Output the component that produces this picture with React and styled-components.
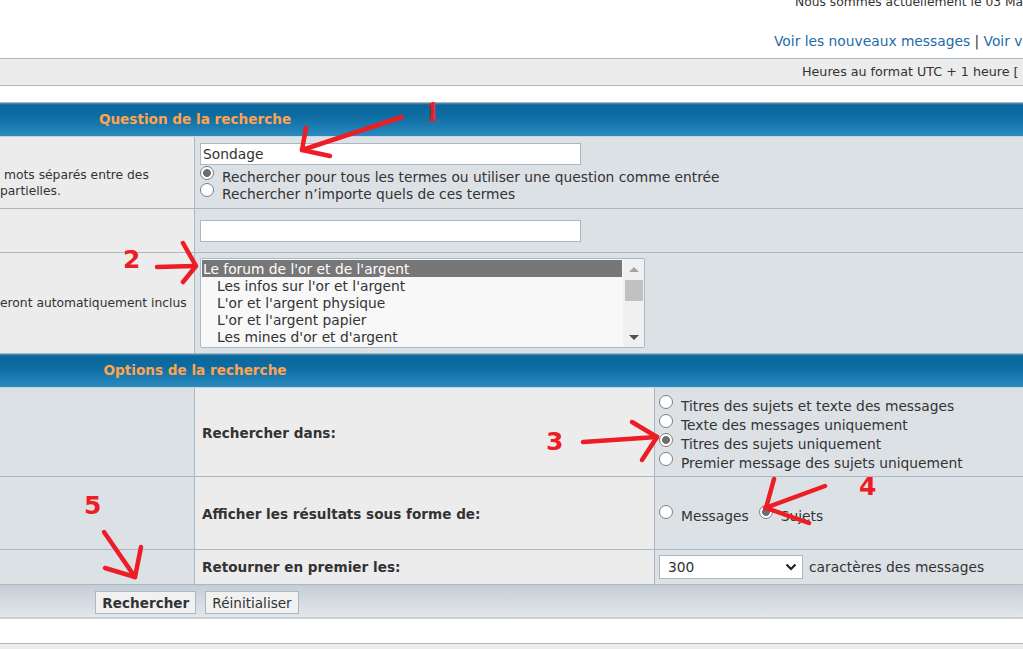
import React from "react";
import styled, { createGlobalStyle } from "styled-components";

// Base
const GlobalStyle = createGlobalStyle`
  *, *::before, *::after { box-sizing: border-box; }
  html, body { margin: 0; padding: 0; background: #fff; }
  body {
    font-family: "DejaVu Sans", Verdana, sans-serif;
    font-size: 13.8px;
    color: #333;
  }
`;

const line = "#a9b8c2";
const tones = { light: "#ececec", blue: "#dce1e5" };

const Page = styled.div`
  position: relative;
  width: 1023px;
  height: 649px;
  overflow: hidden;
  white-space: nowrap;
`;

// Top info
const TopInfo = styled.div`
  height: 58px;
  display: flex;
  flex-direction: column;
`;

const DateLine = styled.div`
  margin: -6px 0 0 795px;
  font-size: 12.3px;
  line-height: 16px;
`;

const NavLinks = styled.div`
  margin: 23px 0 0 774px;
  line-height: 16px;

  a {
    color: #1e6ba8;
    text-decoration: none;
  }
`;

const TimeBar = styled.div`
  height: 28px;
  margin-bottom: 16px;
  padding-left: 802px;
  border-top: 1px solid ${line};
  border-bottom: 1px solid ${line};
  background: ${tones.light};
  font-size: 12.7px;
  line-height: 26px;
`;

// Table
const Header = styled.div`
  height: 35px;
  border-top: 1px solid ${line};
  border-bottom: 1px solid #c9d3da;
  background: linear-gradient(#4f93bb 0, #0a679c 2px, #0d6ca2 40%, #2a8bc1 100%);
`;

const HeaderTitle = styled.div`
  width: 390px;
  text-align: center;
  color: #ffa34f;
  font-size: 13.6px;
  font-weight: bold;
  line-height: 33px;
`;

const Row = styled.div`
  display: grid;
  grid-template-columns: ${(p) => p.$cols};
  height: ${(p) => p.$h}px;

  & + & {
    border-top: 1px solid ${line};
  }
`;

const Cell = styled.div`
  display: flex;
  flex-direction: ${(p) => (p.$col ? "column" : "row")};
  align-items: ${(p) => (p.$col || p.$top ? "flex-start" : "center")};
  padding: ${(p) => p.$pad || "0"};
  background: ${(p) => tones[p.$tone]};
  overflow: hidden;

  &:not(:last-child) {
    border-right: 1px solid ${line};
  }
`;

const Explain = styled.div`
  font-size: 12.3px;
  line-height: 16px;
`;

const ExplainLine = styled.div`
  padding-left: ${(p) => p.$indent || 0}px;
`;

const Label = styled.span`
  font-size: 13.6px;
  font-weight: bold;
`;

const TextInput = styled.input`
  width: 381px;
  height: 22px;
  margin: 0 0 ${(p) => p.$gap || 0}px;
  padding: 0 2px;
  border: 1px solid ${line};
  background: #fff;
  font: inherit;
  color: #333;
  outline: none;
`;

const RadioLine = styled.label`
  display: flex;
  align-items: center;
  height: ${(p) => p.$h || 19}px;
`;

const RadioGroup = styled.div`
  display: flex;
  gap: 10px;
`;

const Radio = styled.span`
  flex: none;
  width: 14px;
  height: 14px;
  margin-right: 8px;
  border-radius: 50%;
  border: 1px solid #7d7d7d;
  background: ${(p) =>
    p.$checked
      ? "radial-gradient(circle, #6e6e6e 0 3.6px, #fff 4.2px)"
      : "#fff"};
  transform: translateY(-4px);
`;

// Listbox
const ListBox = styled.div`
  display: flex;
  width: 445px;
  height: 90px;
  border: 1px solid ${line};
  border-radius: 2px;
  background: #f8f8f8;
`;

const OptionList = styled.div`
  flex: 1;
  padding: 1px;
`;

const Option = styled.div`
  height: 17px;
  line-height: 18px;
  padding-left: ${(p) => (p.$indent ? 15 : 1)}px;
  background: ${(p) => (p.$selected ? "#777" : "transparent")};
  color: ${(p) => (p.$selected ? "#fff" : "#333")};
`;

const ScrollTrack = styled.div`
  display: flex;
  flex-direction: column;
  width: 21px;
  background: #f0f0f0;
`;

const ScrollArrow = styled.div`
  display: flex;
  align-items: center;
  justify-content: center;
  height: 20px;

  &::after {
    content: "";
    border-left: 5px solid transparent;
    border-right: 5px solid transparent;
    ${(p) =>
      p.$down
        ? "border-top: 5px solid #505050;"
        : "border-bottom: 5px solid #a3a3a3;"}
  }
`;

const ScrollThumb = styled.div`
  height: 21px;
  margin: 1px 1px 0 2px;
  background: #c1c1c1;
`;

const ScrollGap = styled.div`
  flex: 1;
`;

// Select
const Select = styled.div`
  display: flex;
  align-items: center;
  justify-content: space-between;
  width: 144px;
  height: 24px;
  padding: 0 5px 0 8px;
  border: 1px solid ${line};
  background: #fff;
`;

const SelectNote = styled.span`
  margin-left: 6px;
`;

// Footer
const Footer = styled.div`
  display: flex;
  height: 35px;
  padding-top: 6px;
  border-top: 1px solid ${line};
  border-bottom: 2px solid #c9d0d7;
  background: linear-gradient(#c5cdd5, #e3e7eb);
`;

const ButtonBar = styled.div`
  display: flex;
  justify-content: center;
  gap: 9px;
  width: 394px;
`;

const Button = styled.button`
  height: 23px;
  padding: 0 6px;
  border: 1px solid ${line};
  background: #f1f1f1;
  font: inherit;
  font-size: 13.6px;
  font-weight: ${(p) => (p.$primary ? "bold" : "normal")};
  color: #333;
`;

const Spacer = styled.div`
  height: 24px;
`;

const BottomBar = styled.div`
  height: 20px;
  border-top: 1px solid ${line};
  background: ${tones.light};
`;

// Annotations
const Marks = styled.svg`
  position: absolute;
  top: 0;
  left: 0;
  pointer-events: none;
`;

const Number = styled.span`
  position: absolute;
  left: ${(p) => p.$x}px;
  top: ${(p) => p.$y}px;
  font-family: ${(p) =>
    p.$serif ? '"Liberation Serif", serif' : '"DejaVu Sans", sans-serif'};
  font-size: ${(p) => (p.$serif ? 29 : 25)}px;
  font-weight: bold;
  line-height: 1;
  color: #ee1c25;
`;

const arrows = [
  { shaft: "402,117 302,150", head: "306,128 302,150 330,156" },
  { shaft: "157,267 195,266", head: "183,243 196,266 183,282" },
  { shaft: "583,442 657,437", head: "632,422 657,437 642,460" },
  { shaft: "825,486 765,508", head: "774,479 766,508 809,523" },
  { shaft: "104,532 135,577", head: "105,568 135,577 141,547" },
];

const Check = () => (
  <svg width="12" height="8" viewBox="0 0 12 8">
    <polyline points="1.5,1.5 6,6 10.5,1.5" fill="none" stroke="#222" strokeWidth="2.2" />
  </svg>
);

const forums = [
  { name: "Le forum de l'or et de l'argent", selected: true },
  { name: "Les infos sur l'or et l'argent", indent: true },
  { name: "L'or et l'argent physique", indent: true },
  { name: "L'or et l'argent papier", indent: true },
  { name: "Les mines d'or et d'argent", indent: true },
];

const whereOptions = [
  "Titres des sujets et texte des messages",
  "Texte des messages uniquement",
  "Titres des sujets uniquement",
  "Premier message des sujets uniquement",
];

const App = () => (
  <Page>
    <GlobalStyle />
    <TopInfo>
      <DateLine>Nous sommes actuellement le 03 Mai 2014, 10:12</DateLine>
      <NavLinks>
        <a href="#">Voir les nouveaux messages</a> | <a href="#">Voir vos messages</a>
      </NavLinks>
    </TopInfo>
    <TimeBar>Heures au format UTC + 1 heure [ Heure d’été ]</TimeBar>

    <Header>
      <HeaderTitle>Question de la recherche</HeaderTitle>
    </Header>
    <Row $cols="195px 1fr" $h={71}>
      <Cell $tone="light" $top $pad="30px 0 0 0">
        <Explain>
          <ExplainLine $indent={4}>mots séparés entre des</ExplainLine>
          <ExplainLine>partielles.</ExplainLine>
        </Explain>
      </Cell>
      <Cell $tone="blue" $col $pad="6px 0 0 5px">
        <TextInput defaultValue="Sondage" $gap={3} />
        <RadioLine $h={17}>
          <Radio $checked />
          Rechercher pour tous les termes ou utiliser une question comme entrée
        </RadioLine>
        <RadioLine $h={17}>
          <Radio />
          Rechercher n’importe quels de ces termes
        </RadioLine>
      </Cell>
    </Row>
    <Row $cols="195px 1fr" $h={44}>
      <Cell $tone="light" />
      <Cell $tone="blue" $pad="0 0 0 5px">
        <TextInput />
      </Cell>
    </Row>
    <Row $cols="195px 1fr" $h={101}>
      <Cell $tone="light">
        <Explain>eront automatiquement inclus</Explain>
      </Cell>
      <Cell $tone="blue" $pad="0 0 0 5px">
        <ListBox>
          <OptionList>
            {forums.map((f) => (
              <Option key={f.name} $selected={f.selected} $indent={f.indent}>
                {f.name}
              </Option>
            ))}
          </OptionList>
          <ScrollTrack>
            <ScrollArrow />
            <ScrollThumb />
            <ScrollGap />
            <ScrollArrow $down />
          </ScrollTrack>
        </ListBox>
      </Cell>
    </Row>

    <Header>
      <HeaderTitle>Options de la recherche</HeaderTitle>
    </Header>
    <Row $cols="195px 460px 1fr" $h={88}>
      <Cell $tone="blue" />
      <Cell $tone="light" $pad="2px 0 0 7px">
        <Label>Rechercher dans:</Label>
      </Cell>
      <Cell $tone="blue" $col $pad="8px 0 0 4px">
        {whereOptions.map((o, i) => (
          <RadioLine key={o}>
            <Radio $checked={i === 2} />
            {o}
          </RadioLine>
        ))}
      </Cell>
    </Row>
    <Row $cols="195px 460px 1fr" $h={73}>
      <Cell $tone="blue" />
      <Cell $tone="light" $pad="1px 0 0 7px">
        <Label>Afficher les résultats sous forme de:</Label>
      </Cell>
      <Cell $tone="blue" $pad="5px 0 0 4px">
        <RadioGroup>
          <RadioLine>
            <Radio />
            Messages
          </RadioLine>
          <RadioLine>
            <Radio $checked />
            Sujets
          </RadioLine>
        </RadioGroup>
      </Cell>
    </Row>
    <Row $cols="195px 460px 1fr" $h={35}>
      <Cell $tone="blue" />
      <Cell $tone="light" $pad="0 0 0 7px">
        <Label>Retourner en premier les:</Label>
      </Cell>
      <Cell $tone="blue" $pad="0 0 0 4px">
        <Select>
          <span>300</span>
          <Check />
        </Select>
        <SelectNote>caractères des messages</SelectNote>
      </Cell>
    </Row>
    <Footer>
      <ButtonBar>
        <Button $primary>Rechercher</Button>
        <Button>Réinitialiser</Button>
      </ButtonBar>
    </Footer>
    <Spacer />
    <BottomBar />

    <Marks width="1023" height="649" viewBox="0 0 1023 649">
      {arrows.map((a, i) => (
        <g key={i} fill="none" stroke="#ee1c25" strokeWidth="4.5" strokeLinecap="round" strokeLinejoin="round">
          <polyline points={a.shaft} />
          <polyline points={a.head} />
        </g>
      ))}
    </Marks>
    <Number $serif $x={425} $y={97}>1</Number>
    <Number $x={123} $y={247}>2</Number>
    <Number $x={546} $y={429}>3</Number>
    <Number $x={859} $y={474}>4</Number>
    <Number $x={84} $y={493}>5</Number>
  </Page>
);

export default App;
